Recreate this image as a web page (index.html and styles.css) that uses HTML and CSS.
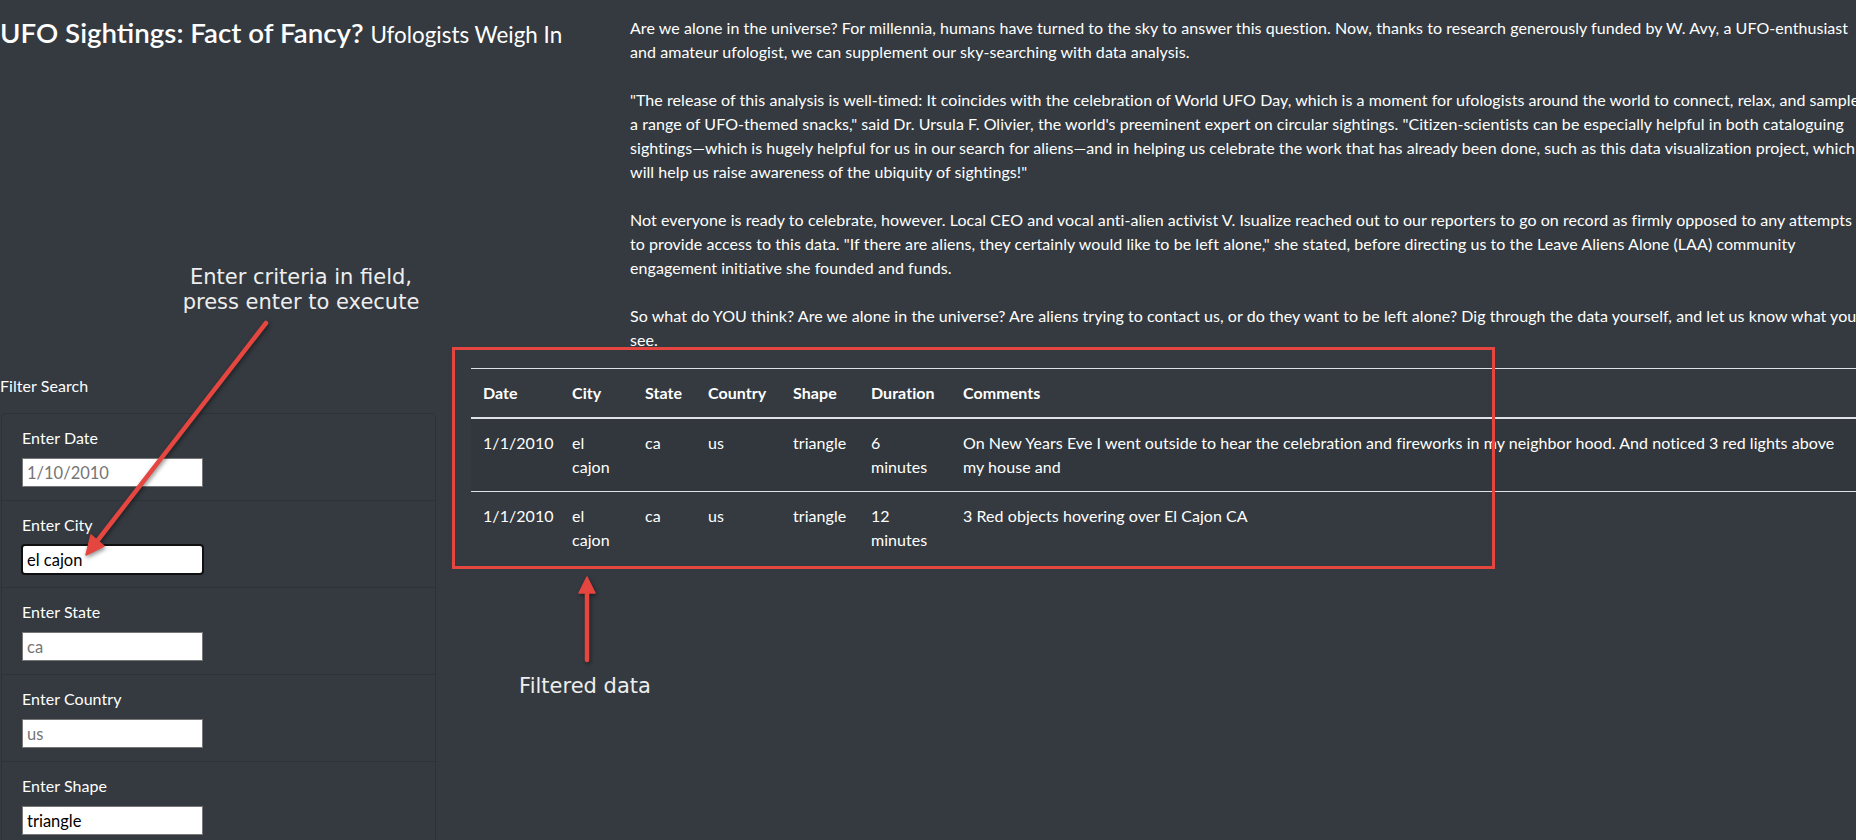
FILE: index.html
```html
<!DOCTYPE html>
<html lang="en">
<head>
<meta charset="utf-8">
<title>UFO Sightings: Fact of Fancy?</title>
<link rel="stylesheet" href="styles.css">
</head>
<body>
<div class="page">
  <header class="top-row">
    <div class="title-col">
      <h1 class="title">UFO Sightings: Fact of Fancy? <small class="subtitle">Ufologists Weigh In</small></h1>
    </div>
    <div class="intro-col">
      <p class="intro">Are we alone in the universe? For millennia, humans have turned to the sky to answer this question. Now, thanks to research generously funded by W. Avy, a UFO-enthusiast<br>and amateur ufologist, we can supplement our sky-searching with data analysis.</p>
      <p class="intro">"The release of this analysis is well-timed: It coincides with the celebration of World UFO Day, which is a moment for ufologists around the world to connect, relax, and sample<br>a range of UFO-themed snacks," said Dr. Ursula F. Olivier, the world's preeminent expert on circular sightings. "Citizen-scientists can be especially helpful in both cataloguing<br>sightings—which is hugely helpful for us in our search for aliens—and in helping us celebrate the work that has already been done, such as this data visualization project, which<br>will help us raise awareness of the ubiquity of sightings!"</p>
      <p class="intro">Not everyone is ready to celebrate, however. Local CEO and vocal anti-alien activist V. Isualize reached out to our reporters to go on record as firmly opposed to any attempts<br>to provide access to this data. "If there are aliens, they certainly would like to be left alone," she stated, before directing us to the Leave Aliens Alone (LAA) community<br>engagement initiative she founded and funds.</p>
      <p class="intro">So what do YOU think? Are we alone in the universe? Are aliens trying to contact us, or do they want to be left alone? Dig through the data yourself, and let us know what you<br>see.</p>
    </div>
  </header>

  <main class="main-row">
    <aside class="filters">
      <h2 class="filter-title">Filter Search</h2>
      <ul class="filter-list">
        <li class="filter-item">
          <label class="filter-label" for="datetime">Enter Date</label>
          <input class="filter-input" id="datetime" type="text" placeholder="1/10/2010">
        </li>
        <li class="filter-item">
          <label class="filter-label" for="city">Enter City</label>
          <input class="filter-input is-focused" id="city" type="text" value="el cajon">
        </li>
        <li class="filter-item">
          <label class="filter-label" for="state">Enter State</label>
          <input class="filter-input" id="state" type="text" placeholder="ca">
        </li>
        <li class="filter-item">
          <label class="filter-label" for="country">Enter Country</label>
          <input class="filter-input" id="country" type="text" placeholder="us">
        </li>
        <li class="filter-item">
          <label class="filter-label" for="shape">Enter Shape</label>
          <input class="filter-input" id="shape" type="text" value="triangle">
        </li>
      </ul>
    </aside>

    <section class="results">
      <table class="ufo-table">
        <colgroup>
          <col class="c-date">
          <col class="c-city">
          <col class="c-state">
          <col class="c-country">
          <col class="c-shape">
          <col class="c-duration">
          <col class="c-comments">
        </colgroup>
        <thead>
          <tr>
            <th>Date</th>
            <th>City</th>
            <th>State</th>
            <th>Country</th>
            <th>Shape</th>
            <th>Duration</th>
            <th>Comments</th>
          </tr>
        </thead>
        <tbody>
          <tr>
            <td>1/1/2010</td>
            <td>el cajon</td>
            <td>ca</td>
            <td>us</td>
            <td>triangle</td>
            <td>6 minutes</td>
            <td class="comment">On New Years Eve I went outside to hear the celebration and fireworks in my neighbor hood. And noticed 3 red lights above<br>my house and</td>
          </tr>
          <tr>
            <td>1/1/2010</td>
            <td>el cajon</td>
            <td>ca</td>
            <td>us</td>
            <td>triangle</td>
            <td>12 minutes</td>
            <td class="comment">3 Red objects hovering over El Cajon CA</td>
          </tr>
        </tbody>
      </table>
    </section>
  </main>

  <div class="annotations">
    <svg class="arrows" width="1856" height="840" viewBox="0 0 1856 840" aria-hidden="true">
      <line x1="266" y1="323" x2="98" y2="540" class="arrow-shaft"/>
      <polygon points="86,555 104,546 91,535" class="arrow-head"/>
      <line x1="587" y1="660" x2="587" y2="590" class="arrow-shaft"/>
      <polygon points="587,577 595,593 579,593" class="arrow-head"/>
    </svg>
    <div class="note note-criteria">Enter criteria in field,<br>press enter to execute</div>
    <div class="note note-filtered">Filtered data</div>
    <div class="highlight-box"></div>
  </div>
</div>
</body>
</html>
```

FILE: styles.css
```css
html, body {
  margin: 0;
  padding: 0;
  overflow: hidden;
  background: #343a40;
}

body {
  color: #ffffff;
  font-family: Lato, "Open Sans", "Liberation Sans", sans-serif;
  font-size: 16px;
  line-height: 24px;
  letter-spacing: 0.06px;
}

.page {
  position: relative;
  width: 1881px;
  height: 840px;
}

/* ---------- top row ---------- */
.top-row {
  display: flex;
}

.title-col {
  width: 630px;
  flex: none;
}

.title {
  margin: 16px 0 0 0;
  font-size: 27.7px;
  line-height: 34px;
  font-weight: 600;
  letter-spacing: 0;
  white-space: nowrap;
}

.subtitle {
  font-size: 22.4px;
  font-weight: 400;
}

.intro-col {
  flex: 1;
  padding-top: 16px;
}

.intro {
  margin: 0 0 24px 0;
  white-space: nowrap;
}

.intro:last-child {
  margin-bottom: 0;
}

/* ---------- main row ---------- */
.main-row {
  display: flex;
  align-items: flex-start;
}

.filters {
  width: 436px;
  flex: none;
}

.filter-title {
  margin: 22px 0 15px 0;
  font-size: 16px;
  line-height: 24px;
  font-weight: 400;
}

.filter-list {
  list-style: none;
  margin: 0 0 0 1px;
  padding: 0;
  border: 1px solid #2d3238;
  border-radius: 4px;
}

.filter-item {
  display: flex;
  flex-direction: column;
  align-items: flex-start;
  padding: 12px 20px 13px 20px;
  border-bottom: 1px solid #2d3238;
}

.filter-item:last-child {
  border-bottom: none;
}

.filter-label {
  margin-bottom: 8px;
  line-height: 24px;
}

.filter-input {
  box-sizing: border-box;
  width: 181px;
  height: 29px;
  margin: 0;
  padding: 1px 4px;
  border: 1px solid #767676;
  border-radius: 0;
  background: #ffffff;
  color: #000000;
  font-family: Lato, "Open Sans", "Liberation Sans", sans-serif;
  font-size: 16.5px;
}

.filter-input::placeholder {
  color: #757575;
}

.filter-input.is-focused {
  border-color: #ffffff;
  border-radius: 3px;
  outline: 2px solid #101010;
  outline-offset: -1px;
}

.results {
  margin-left: 35px;
  margin-top: 16px;
  flex: 1;
}

.ufo-table {
  width: 1410px;
  table-layout: fixed;
  border-collapse: collapse;
}

.c-date { width: 89px; }
.c-city { width: 73px; }
.c-state { width: 63px; }
.c-country { width: 85px; }
.c-shape { width: 78px; }
.c-duration { width: 92px; }

.ufo-table th,
.ufo-table td {
  padding: 12px;
  text-align: left;
  border-top: 1px solid #dee2e6;
}

.ufo-table th {
  font-weight: 700;
  vertical-align: bottom;
  border-bottom: 2px solid #dee2e6;
}

.ufo-table td {
  vertical-align: top;
  font-weight: 400;
}

.ufo-table tbody tr:nth-child(odd) {
  background: rgba(0, 0, 0, 0.05);
}

.ufo-table .comment {
  white-space: nowrap;
}

/* ---------- annotations ---------- */
.annotations {
  position: absolute;
  left: 0;
  top: 0;
  width: 1856px;
  height: 840px;
  pointer-events: none;
  letter-spacing: 0;
}

.arrows {
  position: absolute;
  left: 0;
  top: 0;
  filter: drop-shadow(1px 2px 2px rgba(0, 0, 0, 0.45));
}

.arrow-shaft {
  stroke: #e5463f;
  stroke-width: 4.5;
  stroke-linecap: round;
}

.arrow-head {
  fill: #e5463f;
  stroke: #e5463f;
  stroke-width: 1.5;
  stroke-linejoin: round;
}

.note {
  position: absolute;
  font-family: "DejaVu Sans", Verdana, sans-serif;
  font-size: 21px;
  line-height: 25px;
  color: #eeeeee;
  text-align: center;
  white-space: nowrap;
}

.note-criteria {
  left: 151px;
  top: 265px;
  width: 300px;
}

.note-filtered {
  left: 485px;
  top: 674px;
  width: 200px;
}

.highlight-box {
  position: absolute;
  left: 452px;
  top: 347px;
  width: 1037px;
  height: 216px;
  border: 3px solid #e5463f;
}
```
